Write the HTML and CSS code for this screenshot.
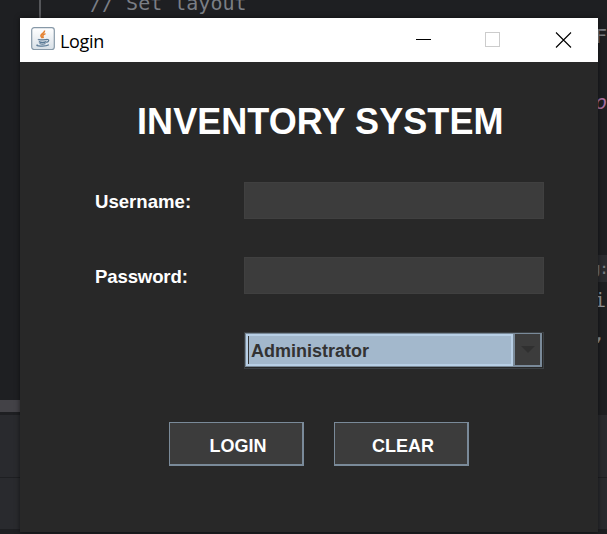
FILE: index.html
```html
<!DOCTYPE html>
<html lang="en">
<head>
<meta charset="utf-8">
<title>Login</title>
<link rel="stylesheet" href="styles.css">
</head>
<body>
<div class="editor">
  <div class="code">
    <div class="line head"><span class="guide"></span><span class="comment">// Set layout</span></div>
    <div class="line comment">F</div>
    <div class="line"></div>
    <div class="line field">o</div>
    <div class="line"></div>
    <div class="line"></div>
    <div class="line"></div>
    <div class="line"></div>
    <div class="line"><span class="hint">g:</span></div>
    <div class="line letter">i</div>
    <div class="line comma">,</div>
  </div>
  <div class="scrollbar"></div>
  <div class="panel"></div>
  <div class="panel lower"></div>
</div>
<main class="window">
  <header class="titlebar">
    <svg class="java" width="24" height="24" viewBox="0 0 24 24">
      <defs><linearGradient id="tile" x2="0" y2="1"><stop stop-color="#fff"/><stop offset="1" stop-color="#d8e0e7"/></linearGradient></defs>
      <rect x=".7" y=".7" width="22.6" height="21.8" rx="2.5" fill="url(#tile)" stroke="#8799a8" stroke-width="1.2"/>
      <path d="M13.5 3.5c1 2.400-4.700 3.400-3.400 6 .3.7 1 1.200 1.300 1.700M14.500 6.600c-3 1.300-3.300 2.400-2 4.400" fill="none" stroke="#e5812f" stroke-width="1.5"/>
      <path d="M7.600 12.200c-2 .8 7.700 1 9 .1M7.800 14.600c1.800.8 5.700.8 7.500 0M8.500 16.500c1.800.8 4.300.8 6 0M15.800 12.600c3-.6 2.200 2.500-.4 2.800M6.700 17.700c-4 1.300 7.500 2.400 11.200.1" fill="none" stroke="#587894" stroke-width="1.2"/>
    </svg>
    <span class="caption">Login</span>
    <svg class="controls" width="156" height="16" viewBox="0 0 156 16" fill="none">
      <path d="M0 7.5h15" stroke="#000"/>
      <rect x="69.5" y=".5" width="14" height="14" stroke="#ccc"/>
      <path d="M140 .5l15 15M155 .5l-15 15" stroke="#000" stroke-width="1.1"/>
    </svg>
  </header>
  <form class="form">
    <h1>INVENTORY SYSTEM</h1>
    <div class="row"><span class="label">Username:</span><div class="input"></div></div>
    <div class="row"><span class="label password">Password:</span><div class="input"></div></div>
    <div class="row combo-row">
      <div class="combo">
        <div class="value">Administrator</div>
        <div class="arrow"><svg width="14" height="7" viewBox="0 0 14 7"><path d="M0 0h14L7 7z" fill="#303030"/></svg></div>
      </div>
    </div>
    <div class="buttons"><div class="button">LOGIN</div><div class="button">CLEAR</div></div>
  </form>
</main>
</body>
</html>
```
FILE: styles.css
```css
* { box-sizing: border-box; }
body { margin: 0; width: 607px; height: 534px; overflow: hidden; background: #1e1f22; font-family: "Liberation Sans", Arial, sans-serif; }
.editor { width: 607px; height: 534px; overflow: hidden; background: #1e1f22; }
.code { height: 400px; overflow: hidden; }
.line { height: 33px; line-height: 33px; padding-left: 595px; font-family: "DejaVu Sans Mono", monospace; font-size: 20px; white-space: pre; color: #92959b; }
.line.head { display: flex; margin-top: -13px; padding-left: 39px; }
.guide { width: 2px; margin-right: 49px; background: #55565a; }
.comment { color: #7a7e85; }
.field { color: #a870a0; font-style: italic; }
.hint { display: inline-block; width: 20px; height: 27px; line-height: 27px; margin-left: -6px; background: #2b2c30; font-size: 16px; letter-spacing: -1.5px; padding-left: 2px; color: #777a80; }
.letter { padding-left: 594px; }
.comma { padding-left: 593px; }
.scrollbar { width: 300px; height: 12px; background: #434247; }
.panel { height: 66px; border-bottom: 1px solid #1e1f22; background: linear-gradient(#1e1f22 3px, #292a2e 3px); }
.panel.lower { height: 51px; border-bottom: 0; background: #292a2e; }
.window { position: absolute; left: 20px; top: 18px; width: 578px; height: 514px; background: #282828; box-shadow: 0 0 5px rgba(0,0,0,.55); }
.titlebar { display: flex; height: 44px; padding-left: 11px; background: #fff; }
.java { margin-top: 9px; }
.caption { width: 89px; margin-left: 5px; font: 18px/46px "Open Sans", "Noto Sans", sans-serif; letter-spacing: -.3px; color: #000; }
.controls { margin: 14px 0 0 267px; }
.form { display: flex; flex-direction: column; }
h1 { height: 120px; margin: 0; padding-left: 117px; font-size: 36px; line-height: 119px; font-weight: 700; letter-spacing: .07px; color: #fff; white-space: nowrap; }
.row { display: flex; height: 37px; margin-bottom: 38px; padding-left: 75px; }
.label { width: 149px; font-size: 18.6px; font-weight: 700; line-height: 39px; color: #fff; }
.label.password { letter-spacing: -.15px; }
.input { width: 300px; height: 37px; background: #3c3c3c; border: 1px solid #404040; }
.combo-row { height: 38px; margin-bottom: 52px; padding-left: 224px; }
.combo { display: flex; width: 300px; height: 37px; border: 1px solid #3c4043; }
.value { display: flex; align-items: center; width: 268px; height: 34px; padding: 2px 0 0 3px; background: #a3b8cc; border: 1px solid #7a8a99; border-right: 0; box-shadow: inset 0 0 0 2px #b8cfe5; font-size: 18px; font-weight: 700; line-height: 34px; color: #333; }
.value::before { content: ""; width: 1px; height: 28px; margin: -2px 2px 0 -1px; background: #333; }
.arrow { display: flex; align-items: center; justify-content: center; width: 29px; height: 34px; border: 2px solid #7a8a99; border-top-width: 1px; background: #3c3c3c; }
.buttons { display: flex; gap: 30px; padding-left: 149px; }
.button { width: 135px; height: 44px; border: 1px solid #7a8a99; border-right-width: 2px; border-bottom-width: 2px; background: #3c3c3c; font-size: 18px; font-weight: 700; line-height: 46px; text-align: center; color: #fff; padding-left: 4px; }
```
